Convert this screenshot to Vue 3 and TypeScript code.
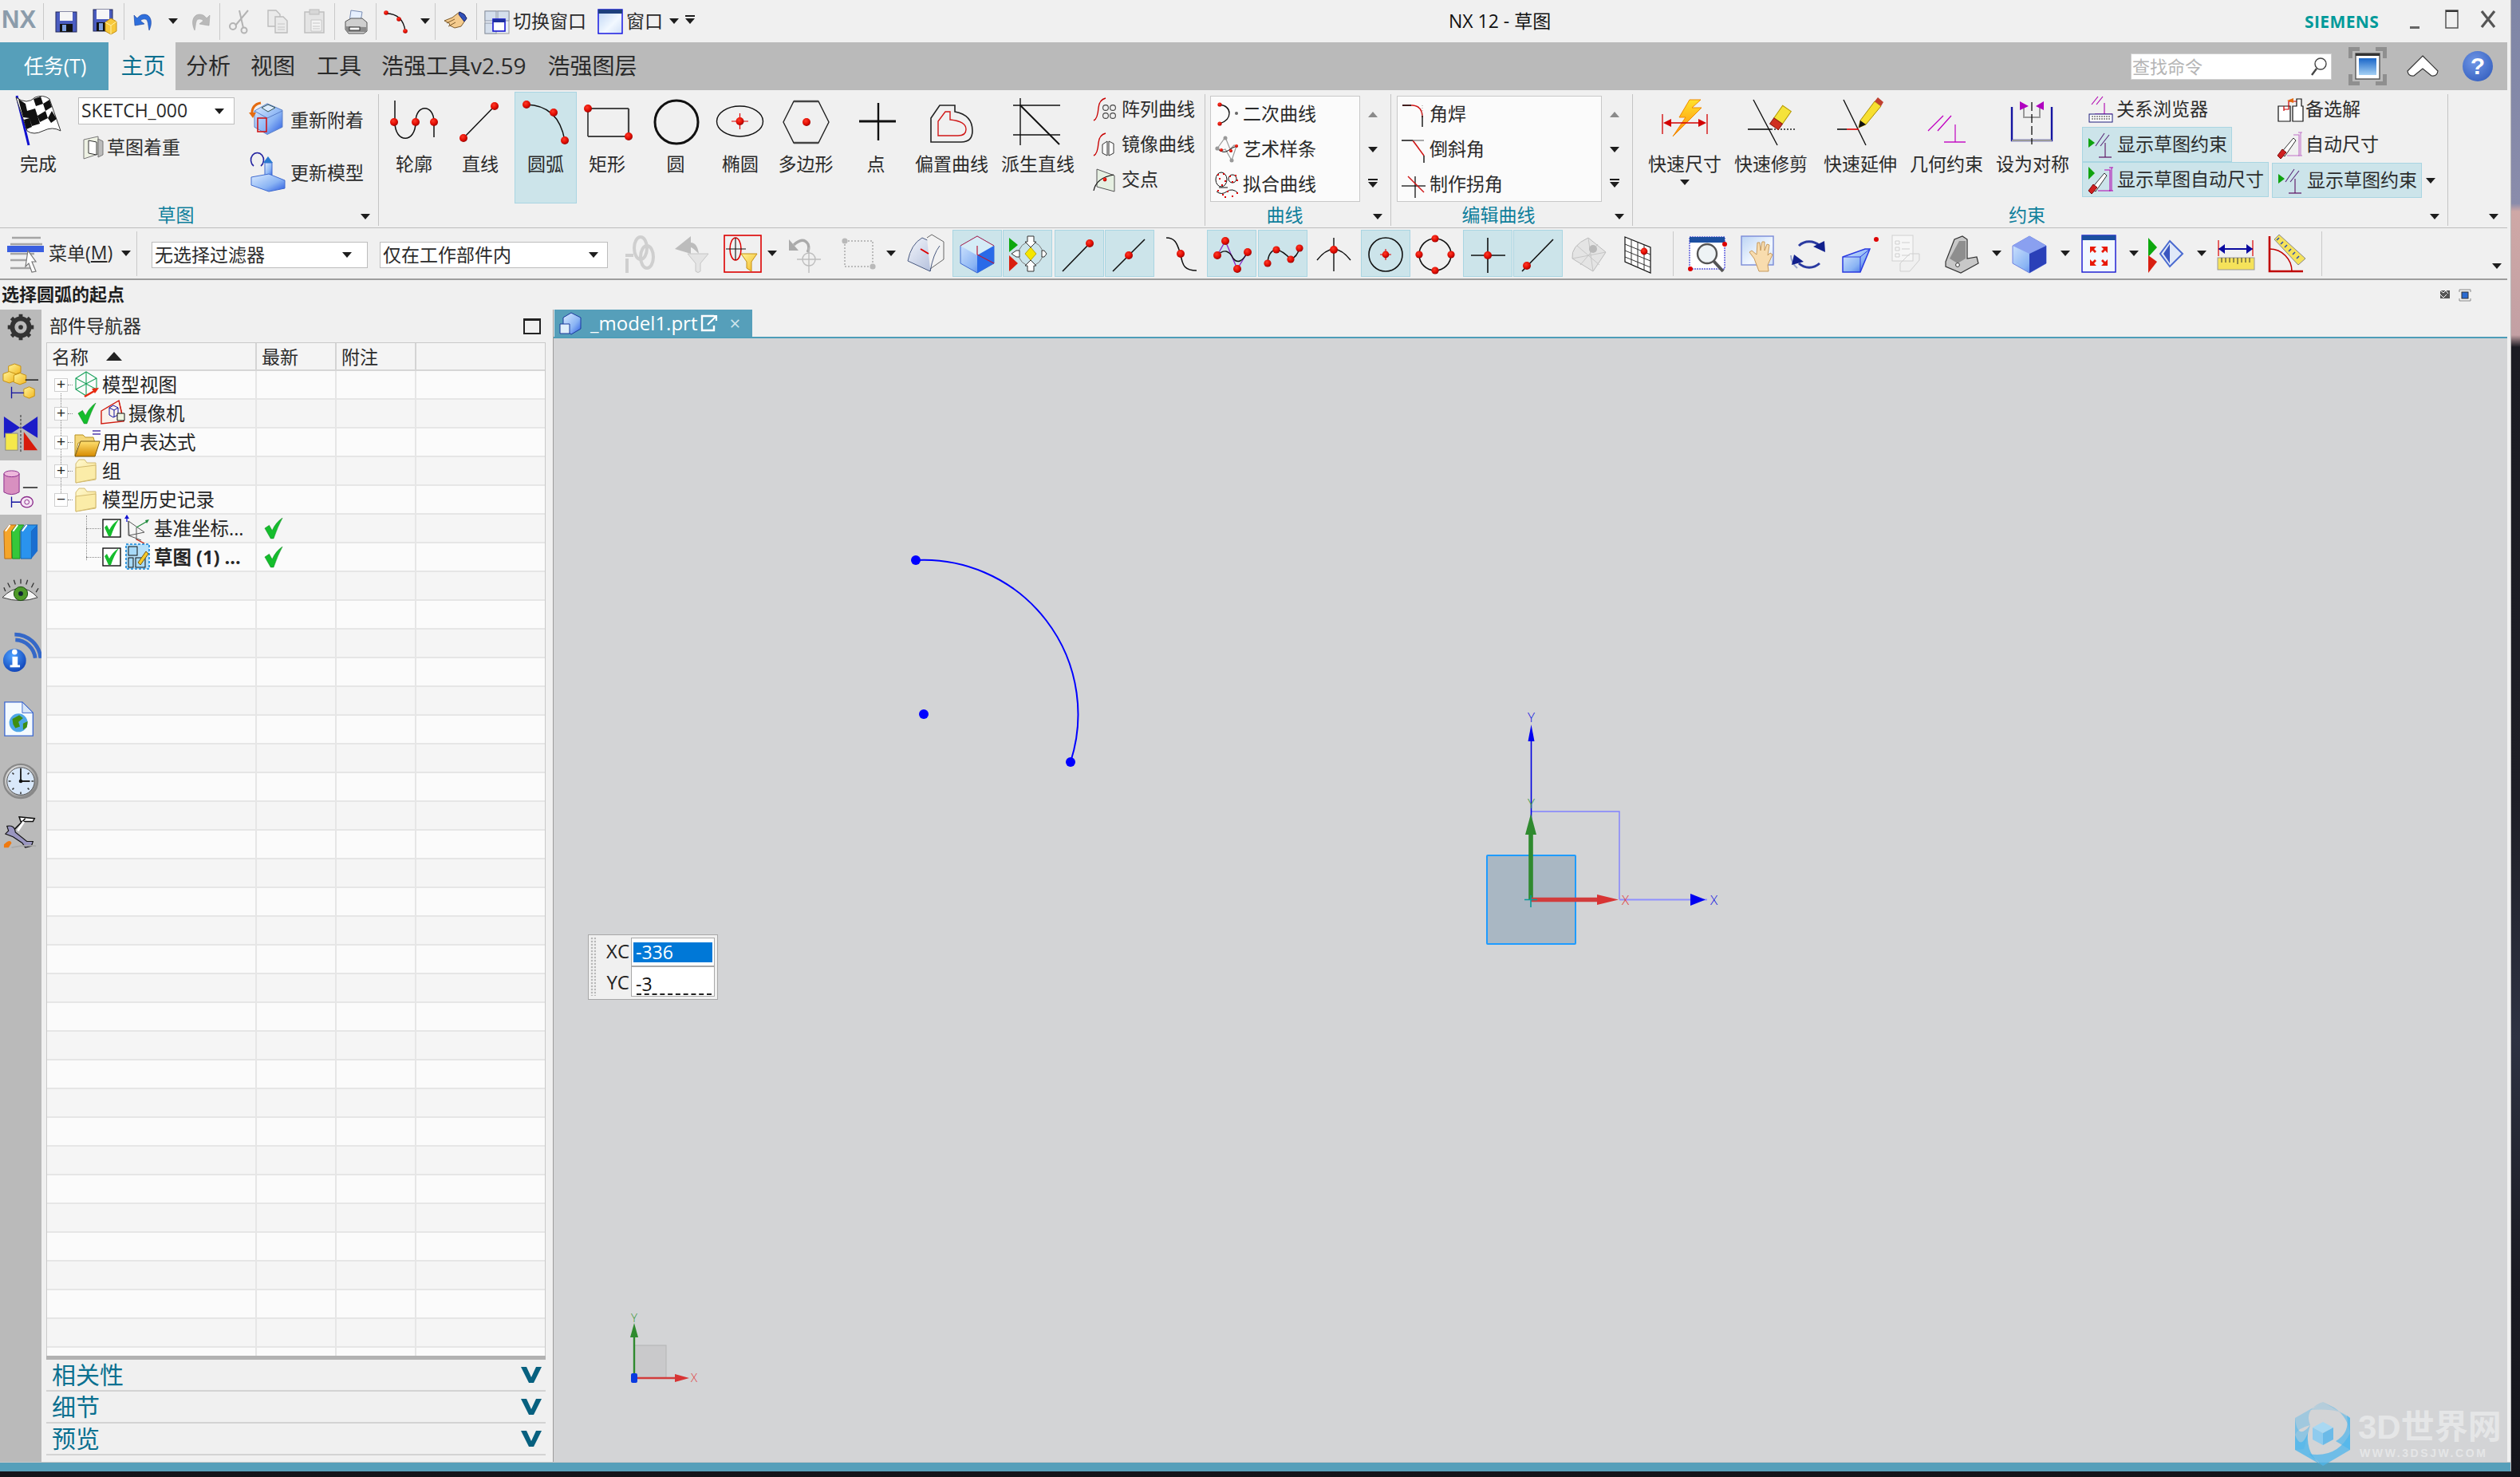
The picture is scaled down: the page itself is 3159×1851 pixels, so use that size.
<script setup lang="ts">
type Cell = { a: number; b: number; k: 'i' | 's' | 'd' | 't'; ic?: string; hl?: boolean; t?: string; c?: string };

const dot = (x: number, y: number, r = 5) => `<circle cx="${x}" cy="${y}" r="${r}" fill="url(#rd)"/>`;
const ln = (d: string, w = 1.6, c = '#111') => `<path d="${d}" fill="none" stroke="${c}" stroke-width="${w}"/>`;
const checkPath = 'M1 15 L7 11 L11 18 Q16 7 25 1 Q19 12 13 29 L9 29 Z';

const I: Record<string, string> = {
  /* title bar, 32 */
  save: `<rect x="3" y="4" width="26" height="25" fill="#4a5cc0" stroke="#20265a"/><rect x="8" y="4" width="16" height="11" fill="#f6f6f6"/><rect x="8" y="19" width="16" height="10" fill="#111"/><rect x="11" y="20" width="5" height="8" fill="#7fa0e0"/>`,
  saveas: `<rect x="3" y="1" width="24" height="27" fill="#4a5cc0" stroke="#20265a"/><rect x="7" y="1" width="16" height="12" fill="#f6f6f6"/><rect x="7" y="17" width="14" height="11" fill="#111"/><rect x="10" y="18" width="5" height="9" fill="#7fa0e0"/><path d="M18 17l7-5 7 4v12l-7 4-7-4z" fill="#f7c83a" stroke="#c58f10"/><path d="M18 17l7 4 7-5M25 21v11" fill="none" stroke="#fff1a8"/>`,
  undo: `<path d="M22 27 C27 17 24 7 16 7 C12 7 9 9 7 12 L3 8 L4 21 L16 19 L11 15 C14 12 19 12 20 16 C21 19 21 23 22 27 Z" fill="#2e6fdc" stroke="#1a3f9c" stroke-width=".6"/>`,
  redo: `<path d="M10 27 C5 17 8 7 16 7 C20 7 23 9 25 12 L29 8 L28 21 L16 19 L21 15 C18 12 13 12 12 16 C11 19 11 23 10 27 Z" fill="#b9b9b9" stroke="#a3a3a3" stroke-width=".6"/>`,
  cut: `<g fill="none" stroke="#b3b3b3" stroke-width="2"><path d="M26 2 L10 21M15 2 L20 24"/><circle cx="7" cy="22" r="4"/><circle cx="21" cy="27" r="3.5"/></g>`,
  copy: `<g fill="#eaeaea" stroke="#bcbcbc" stroke-width="1.4"><path d="M4 2h10l5 5v15H4z"/><path d="M13 10h10l5 5v15H13z"/></g><path d="M16 19h9M16 23h9M16 26h9" stroke="#c6c6c6"/>`,
  paste: `<rect x="4" y="4" width="24" height="26" fill="#e4e4e4" stroke="#bcbcbc" stroke-width="1.4"/><rect x="10" y="1" width="12" height="6" fill="#d6d6d6" stroke="#bcbcbc"/><path d="M12 14h13v14H12z" fill="#f4f4f4" stroke="#c6c6c6"/><path d="M14 18h9M14 22h9M14 25h9" stroke="#c6c6c6"/>`,
  print: `<path d="M10 2l14 2-2 12H8z" fill="#e6f0ff" stroke="#7b8fb5"/><path d="M3 16l7-4h14l6 5v11l-4 3H7l-4-5z" fill="#cfcfcf" stroke="#555"/><path d="M3 22l26 1v6H5z" fill="#8a8a8a"/><rect x="8" y="23" width="13" height="4" fill="#f6f6f6" stroke="#333"/>`,
  arcs: ln('M3 6 Q24 6 27 28', 1.3) + dot(3, 5, 2.8) + dot(19, 13, 2.8) + dot(27, 28, 2.8),
  hand: `<path d="M2 15l10-4 9-7 6 3 3 5-7 10-8 2-6-3-1-3z" fill="#f4cb8e" stroke="#7c5a2a"/><path d="M21 4l6 3 3 5-3 4-7-9z" fill="#3150b8" stroke="#1b2b77"/><path d="M7 22l9-5M5 18l10-5" stroke="#7c5a2a" fill="none"/>`,
  swin: `<rect x="1" y="3" width="30" height="28" fill="#e9eff8" stroke="#999"/><rect x="1" y="3" width="14" height="12" fill="#d5dfec" stroke="#8e98a8"/><rect x="17" y="3" width="14" height="12" fill="#d5dfec" stroke="#8e98a8"/><rect x="1" y="18" width="14" height="13" fill="#d5dfec" stroke="#8e98a8"/><rect x="11" y="13" width="15" height="15" fill="#fff" stroke="#1414d0" stroke-width="1.6"/><rect x="11" y="13" width="15" height="4" fill="#1c2f9c"/>`,
  win: `<rect x="1" y="1" width="30" height="30" fill="url(#wn)" stroke="#0a0ae0" stroke-width="1.4"/><rect x="1" y="1" width="30" height="5" fill="#1c3f7c"/>`,
  min: `<rect x="9" y="22" width="12" height="3" fill="#666"/>`,
  max: `<rect x="8" y="2" width="15" height="22" fill="none" stroke="#555" stroke-width="1.5"/><rect x="8" y="2" width="15" height="2" fill="#333"/>`,
  close: `<path d="M8 3 L24 23M24 3 L8 23" stroke="#555" stroke-width="3.2"/>`,
  /* big tools, 64x68 */
  profile: ln('M8 8 V35 C8 62 34 62 34 35 C34 12 57 12 57 35 V54', 1.5) + dot(7, 35) + dot(34, 35) + dot(57, 35),
  line: ln('M11 55 L50 15', 1.5) + dot(11, 55) + dot(50, 15),
  arc: ln('M8 13 Q48 14 56 58', 1.5) + dot(8, 13) + dot(42, 23) + dot(56, 58),
  rect: ln('M8 18 H59', 1.4) + ln('M8 18 V53', 1.4) + ln('M8 53 H59 V18', 2.2, '#444') + dot(8, 18) + dot(59, 53),
  circle: `<circle cx="33" cy="35" r="27" fill="none" stroke="#111" stroke-width="3"/>`,
  ellipse: `<ellipse cx="31.5" cy="34" rx="29" ry="19" fill="none" stroke="#111" stroke-width="1.4"/>` + ln('M21 34H42M31.5 24V44', 1.2, '#d00') + dot(31.5, 34, 5),
  poly: `<path d="M17 9H48L61 35 48 61H17L4 35Z" fill="none" stroke="#222" stroke-width="1.4"/>` + ln('M17 9H48M17 61H48', 2.4, '#444') + dot(33, 35, 5),
  point: ln('M11 34H57', 3) + ln('M35 11V58', 2.4),
  offset: `<path d="M6 60V30L17 14H36V22Q58 26 58 46Q58 60 44 60Z" fill="none" stroke="#222" stroke-width="1.6"/><path d="M15 52V34L24 22H30V32Q50 34 50 44Q50 52 40 52Z" fill="none" stroke="#d01616" stroke-width="1.4"/>`,
  derived: ln('M10 5V64M1 14H60M1 51H60', 1.4) + ln('M10 14L59 63', 2),
  qdim: `<path d="M38 7H52L41 17H53L17 53 33 29H25Z" fill="url(#bolt)" stroke="#f08a00" stroke-width="1"/>` + ln('M4 25V50M60 25V50', 1.3, '#d20000') + ln('M10 36H54', 1.6, '#d20000') + `<path d="M5 36l10-5v10zM59 36l-10-5v10z" fill="#d20000"/>`,
  qtrim: ln('M10 7L40 64', 1.4) + ln('M3 44H32', 1.6) + ln('M32 44H62', 1.5, '#222').replace('/>', ' stroke-dasharray="2 2"/>') + `<g transform="rotate(35 43 30)"><rect x="37" y="15" width="13" height="19" fill="#f5e33a" stroke="#b59a00"/><rect x="37" y="34" width="13" height="9" fill="#d03020" stroke="#8a1b10"/></g>`,
  qext: ln('M11 7L39 64', 1.4) + ln('M3 44H15', 1.6) + ln('M15 44H30', 1.6, '#d00') + `<path d="M30 42L32 33 50 9 58 15 39 38Z" fill="#f7df30" stroke="#a98a00"/><path d="M30 42L32 33 39 38Z" fill="#111"/><path d="M50 9L54 4 61 10 58 15Z" fill="#c04030"/>`,
  geom: ln('M9 46L28 27M21 46L38 27', 1.3, '#c000c0') + ln('M43 38V60', 1.2, '#c000c0') + ln('M29 60H56', 1.4, '#c000c0'),
  sym: `<path d="M6 16V58H56V16" fill="none" stroke="#1414a0" stroke-width="2.4"/><path d="M6 58H56" stroke="#999" stroke-width="2.2"/><path d="M21 16V29H41V16" fill="none" stroke="#999" stroke-width="2"/><path d="M31 10V63" stroke="#111" stroke-width="1.3" stroke-dasharray="11 4"/><path d="M16 9L27 15 16 20ZM46 9L36 15 46 20Z" fill="#b000c0"/>`,
  flag: `<path d="M5 2 L20 64" stroke="#1010d0" stroke-width="3"/><path d="M4 4 Q18 14 28 4 Q38 0 46 6 L60 46 Q50 40 38 46 Q26 52 18 46Z" fill="#fff" stroke="#333"/><g fill="#111"><path d="M7 6l9 6 2 9-8-3zM26 6l9-3 3 9-9 3zM18 21l10-3 3 9-10 3zM38 12l8-5 3 9-8 5zM10 18l8 3 3 9-8-1zM31 27l10-6 3 9-10 5zM21 30l10-3 3 10-10 3zM44 30l5-9 6 10-7 5zM14 32l7-2 3 11-7 3z"/></g>`,
  /* small row, 30x32 */
  paint: `<path d="M4 6l18-4v22L4 30z" fill="#eef2e4" stroke="#777"/><path d="M10 7l10 2v16l-10-2z" fill="#fff" stroke="#333"/><path d="M22 5l6 3v17l-6 3z" fill="#bcbcbc" stroke="#777"/>`,
  reattach: `<path d="M6 12l16-10 19 9v23L22 44 6 34z" transform="scale(1 .92)" fill="url(#bl)" stroke="#5a7fc8"/><path d="M6 11l16 9 19-9" fill="none" stroke="#5a7fc8"/><path d="M15 7l8-4 9 4-9 5z" fill="#dcebff" stroke="#355"/><rect x="10" y="20" width="11" height="17" fill="none" stroke="#d01616" stroke-width="1.6"/><path d="M14 1Q2 3 3 16" fill="none" stroke="#e46b10" stroke-width="3"/><path d="M-1 13h9l-4 7z" fill="#e46b10"/>`,
  update: `<path d="M9 16 A8 9 0 1 1 18 16" fill="none" stroke="#2323a0" stroke-width="1.6" transform="translate(-4 -2)"/><rect x="19" y="10" width="9" height="18" fill="url(#bl)" stroke="#3f6ad0"/><path d="M23 2l6 8h-12z" fill="#2a7ad0"/><path d="M2 28l22-4 20 8v10L24 46 2 38z" fill="url(#bl)" stroke="#3f6ad0"/>`,
  arrc: ln('M16 2 Q8 4 7 14 Q6 28 1 30', 1.4, '#c80000') + `<g fill="none" stroke="#444" stroke-width="1.1"><circle cx="16" cy="14" r="3.4"/><circle cx="25" cy="14" r="3.4"/><circle cx="16" cy="24" r="3.4"/><circle cx="25" cy="24" r="3.4"/></g>`,
  mirc: ln('M16 2 Q8 4 7 14 Q6 28 1 30', 1.4, '#c80000') + `<path d="M12 16l6-4v18l-6-3zM20 12l6 3v12l-6 3z" fill="#fff" stroke="#333"/>`,
  inter: `<path d="M5 3l22 8v20L5 25z" fill="#e6f0e2" stroke="#555"/>` + ln('M1 30 Q4 14 26 10', 1.2) + dot(15, 16, 2.4),
  conic: ln('M6 4 Q18 6 18 15 Q18 24 6 28', 1.3) + dot(6, 4, 2.6) + dot(6, 28, 2.6) + `<circle cx="27" cy="15" r="2" fill="#666"/>`,
  art: `<path d="M3 15L13 1 19 16 24 11 27 12 21 30 13 16 7 18Z" fill="none" stroke="#999" stroke-width="1.2"/>` + ln('M3 15 Q10 22 16 18 Q22 14 27 12', 1) + `<circle cx="13" cy="2" r="2.5" fill="#999"/><circle cx="3" cy="15" r="2.6" fill="#999"/><circle cx="21" cy="30" r="2.5" fill="#999"/>` + dot(8, 17, 2) + dot(20, 18, 2) + dot(27, 12, 2),
  fit: `<g fill="none" stroke="#111" stroke-width="1"><ellipse cx="8" cy="10" rx="7" ry="9"/><circle cx="22" cy="9" r="5"/><path d="M2 25 Q8 30 15 25 T29 27M5 20H16"/></g><g fill="#d00">` + [[3, 3], [10, 2], [5, 8], [12, 11], [8, 16], [18, 5], [25, 4], [21, 12], [27, 10], [3, 23], [9, 28], [15, 24], [21, 30], [27, 26], [12, 31]].map(p => `<rect x="${p[0]}" y="${p[1]}" width="2" height="2"/>`).join('') + `</g>`,
  fillet: ln('M1 5H14 Q26 6 26 20', 1.5, '#d01616') + ln('M1 5H12', 1.5) + ln('M26 18V32', 1.4) + ln('M26 5V18', 1, '#999').replace('/>', ' stroke-dasharray="1 2"/>'),
  chamfer: ln('M0 5H14', 1.5) + ln('M14 5L28 24', 1.6, '#d01616') + ln('M14 5H28', 1, '#555') + ln('M28 24V33', 1.4),
  corner: ln('M0 18H30', 1.3) + ln('M17 6V33', 1.3) + ln('M8 6L28 26', 1.4, '#d01616'),
  rel: ln('M4 10L12 0M10 10L18 0', 1.1, '#b000b0') + ln('M20 8V22M8 22H30', 1.1, '#b000b0') + `<rect x="1" y="22" width="29" height="10" fill="#fff" stroke="#1a1a7a"/><path d="M4 25h24M4 28h24" stroke="#333" stroke-dasharray="2 1"/>`,
  showc: `<path d="M0 8l8 6-8 6z" fill="#0fa30f"/>` + ln('M9 18L20 2M15 18L26 4', 1.1, '#5a2a7a') + ln('M21 14V32', 1.1, '#5a1060') + ln('M13 32H29', 1.2, '#5a1060'),
  showd: `<path d="M0 0l8 8-8 8z" fill="#0fa30f"/>` + ln('M20 4H27V30H12', 1.1, '#b000b0') + ln('M26 1H31M26 30H31M29 1V30', 1, '#b000b0') + `<path d="M4 27L20 8 23 11 9 31Z" fill="#fff" stroke="#333"/><path d="M0 30l6-8 5 4-7 8z" fill="#d02020" stroke="#7a0a0a"/>`,
  alt: `<path d="M1 12H16V31H1z M19 31V12H24V3H30V12 H32V31Z" fill="#fff" stroke="#111" stroke-width="1.2"/><path d="M8 18V12M8 16H14V6H24" fill="none" stroke="#c00" stroke-width="1.2"/><path d="M12 5l8-3v6z" fill="#e46b10"/>`,
  autod: ln('M20 4H27V30H12', 1.1, '#c070c8') + ln('M26 1H31M26 30H31M29 1V30', 1, '#c070c8') + `<path d="M4 27L20 8 23 11 9 31Z" fill="#fff" stroke="#333"/><path d="M0 30l6-8 5 4-7 8z" fill="#d02020" stroke="#7a0a0a"/>`,
  /* toolbar, 48 */
  menu: `<path d="M6 4h36M4 12h40M4 24h30M4 32h28M4 42h30" stroke="#a5a5a5" stroke-width="2.6"/><rect x="0" y="14" width="46" height="8" fill="#3a5fe0"/><path d="M26 20L36 34H31L36 46 31 47 27 36 23 40Z" fill="#fff" stroke="#777" stroke-width="1.2"/>`,
  links: `<g fill="none" stroke="#cfcfcf" stroke-width="4"><ellipse cx="19" cy="17" rx="8" ry="14"/><ellipse cx="27" cy="28" rx="8" ry="14"/><path d="M0 26H10M2 30V48"/></g>`,
  fgrey: `<path d="M4 18L24 2V10Q32 10 34 24Q26 16 24 16V24Z" fill="#bcbcbc"/><path d="M20 24H46L36 36V46Q33 49 30 46V36Z" fill="#e4e4e4" stroke="#c6c6c6"/>`,
  filt: `<rect x="1" y="1" width="46" height="46" fill="none" stroke="#d00" stroke-width="1.6"/><ellipse cx="15" cy="18" rx="7" ry="14" fill="none" stroke="#d00" stroke-width="1.5"/>` + ln('M3 18H28M15 4V32', 1.1) + `<path d="M22 24H42L35 34V46L29 42V34Z" fill="url(#gold)" stroke="#c58f10"/>`,
  undoc: ln('M10 13 Q22 2 28 12 Q30 18 27 22', 3.4, '#aaa') + `<path d="M4 6V20H16Z" fill="#aaa"/><circle cx="29" cy="31" r="8" fill="none" stroke="#bdbdbd" stroke-width="1.4"/><path d="M29 16V48M14 31H44" stroke="#bdbdbd" stroke-width="1.4"/>`,
  dotr: `<rect x="7" y="8" width="35" height="32" fill="none" stroke="#bbb" stroke-width="2" stroke-dasharray="2 2"/><circle cx="7" cy="8" r="3.6" fill="#b9b9b9"/><circle cx="42" cy="40" r="3.6" fill="#b9b9b9"/>`,
  surf: `<path d="M2 33Q6 12 20 4L42 14Q34 24 30 46Z" fill="url(#sf)" stroke="#4a5a80"/><path d="M26 4l6-4 15 9v22l-17 12" fill="#f2f2f2" stroke="#666"/><path d="M42 14Q34 24 30 46" fill="none" stroke="#4a5a80"/><path d="M18 18L28 24" stroke="#d00" stroke-width="2"/>`,
  cube: `<path d="M3 14L24 2 45 14V36L24 48 3 36Z" fill="url(#bl)" stroke="#3f6ad0"/><path d="M3 14L24 26 45 14" fill="#d5ecf7"/><path d="M24 26L45 14V36L24 48Z" fill="#2a6ae8"/><path d="M24 2V25L45 36" fill="none" stroke="#b81a3a" stroke-width="1.2"/><path d="M3 14L24 2 45 14" fill="#d5ecf7" stroke="#b81a3a" stroke-width=".9"/>`,
  snap: `<path d="M1 4l11 9-11 9z" fill="#0da80d"/><path d="M1 26l11 10-11 10z" fill="#d81f10"/><circle cx="28" cy="24" r="15" fill="none" stroke="#777"/><path d="M24 2h8v7h3l-7 7-7-7h3zM24 46h8v-7h3l-7-7-7 7h3zM14 20v8h-4l-6-4 6-4zM42 20v8h3l3-4-3-4z" fill="#fff" stroke="#333"/><path d="M28 16l7 8-7 8-7-8z" fill="#f5e600" stroke="#bba700"/>`,
  lend: ln('M3 46L37 11', 1.6) + dot(37, 11, 5),
  lmid: ln('M3 46L43 6', 1.6) + dot(23, 26, 5),
  curve: ln('M6 4C20 4 20 16 24 24C26 40 30 45 44 45', 1.6) + dot(24, 24, 5),
  zig: ln('M16 8L31 43 44 22M16 8L6 26', 1.4, '#8a2ac8') + ln('M6 26Q18 14 26 30Q34 40 44 22', 1.4) + dot(16, 8, 5) + dot(6, 26, 5) + dot(44, 22, 5) + dot(31, 43, 5),
  wave: ln('M5 36Q6 20 16 19Q24 20 34 31Q42 28 45 17', 1.5) + dot(5, 36, 4.6) + dot(16, 19, 4.6) + dot(34, 31, 4.6) + dot(45, 17, 4.6),
  tang: ln('M24 4V46', 1.4) + ln('M3 32Q24 5 45 32', 1.4) + dot(24, 19, 5),
  circc: `<circle cx="24" cy="25" r="21" fill="none" stroke="#111" stroke-width="1.6"/>` + ln('M17 25H31M24 18V32', 1.1, '#d00') + dot(24, 25, 4.4),
  circq: `<circle cx="24" cy="25" r="20" fill="none" stroke="#111" stroke-width="1.6"/>` + dot(24, 5, 4.6) + dot(4, 25, 4.6) + dot(44, 25, 4.6) + dot(24, 45, 4.6),
  crossp: ln('M3 26H46M24 4V48', 1.6) + dot(24, 26, 5),
  linep: ln('M4 46L43 6', 1.6) + dot(10, 39, 5),
  mesh: `<path d="M24 4L46 22 30 46 4 30Q2 14 24 4Z" fill="#e4e4e4" stroke="#bbb"/><path d="M24 4L30 46M4 30L46 22M10 14L38 38M36 12L14 38" stroke="#c6c6c6" fill="none"/><circle cx="30" cy="18" r="5" fill="#b9b9b9"/>`,
  grid: `<path d="M8 3L40 16V48L8 34Z" fill="#fff" stroke="#111" stroke-width="1.2"/><path d="M16 6V37M24 10V41M32 13V44M8 12L40 25M8 20L40 33M8 28L40 41" stroke="#333" fill="none"/>` + dot(32, 21, 4.4),
  zoom: `<rect x="1" y="3" width="44" height="40" fill="#fff" stroke="#1414d0" stroke-dasharray="2 1"/><rect x="1" y="3" width="44" height="7" fill="#1c4fa0"/><circle cx="23" cy="24" r="12" fill="#eef3f5" stroke="#555" stroke-width="2.4"/><path d="M31 33L43 46" stroke="#555" stroke-width="4"/><circle cx="45" cy="12" r="3" fill="#d00"/><circle cx="2" cy="43" r="3" fill="#d00"/>`,
  pan: `<rect x="2" y="2" width="40" height="36" fill="url(#wn)" stroke="#7a8ad8" stroke-width="1.4"/><path d="M18 30L12 22 15 20 21 25 22 10 25 10 26 20 28 9 31 9 31 20 34 12 37 13 35 26 38 23 41 25 35 38 36 46 24 46 Z" fill="#f8dcae" stroke="#c79a5c"/>`,
  rot: `<g fill="none" stroke="#2a3aa0" stroke-width="3"><path d="M12 14A19 19 0 0 1 38 14"/><path d="M38 36A19 19 0 0 1 12 36"/></g><path d="M2 26 A22 22 0 0 0 10 42" fill="none" stroke="#9aa6cc" stroke-width="2"/><path d="M30 15L44 8 45 22ZM18 34L3 38 6 25Z" fill="#11208c"/>`,
  cuboid: `<path d="M2 28L30 18 36 18 24 47H2Z" fill="url(#bl)" stroke="#2a3ae0" stroke-width="1.5"/><path d="M2 28H24V47M24 28L36 18" fill="none" stroke="#2a3ae0"/><circle cx="44" cy="6" r="3" fill="#d00"/>`,
  docg: `<rect x="2" y="1" width="26" height="32" fill="#f6f6f6" stroke="#d0d0d0"/><path d="M6 8h5v4H6zM6 16h5v4H6zM6 24h5v4H6zM14 10h10M14 18h10M14 26h10" stroke="#cfcfcf" fill="none"/><path d="M12 36L24 24H36V32L24 46H12Z" fill="none" stroke="#cfcfcf"/>`,
  lbrk: `<path d="M3 34L14 6 24 2 30 6V30L42 28 44 36 22 48 3 40Z" fill="#c8c8c8" stroke="#333" stroke-width="1.2"/><path d="M8 30L20 8H28V30L18 36Z" fill="#8e8e8e"/><circle cx="18" cy="38" r="2.4" fill="#fff" stroke="#333"/>`,
  bcube: `<path d="M2 14L23 2 44 14V36L23 48 2 36Z" fill="url(#bl)" stroke="#6f82e0"/><path d="M2 14L23 24 44 14 23 2Z" fill="#8aa0f0"/><path d="M23 24L44 14V36L23 48Z" fill="#2a40b8"/>`,
  fitv: `<rect x="1" y="1" width="42" height="46" fill="#f2f8ff" stroke="#1414d0" stroke-width="1.4"/><rect x="1" y="1" width="42" height="6" fill="#1c4fa0"/><path d="M11 15l8 0-3 3 3 3-2 2-3-3-3 3zM33 15h-8l3 3-3 3 2 2 3-3 3 3zM11 39h8l-3-3 3-3-2-2-3 3-3-3zM33 39h-8l3-3-3-3 2-2 3 3 3-3z" fill="#e81a0a"/>`,
  vis: `<path d="M1 4L12 16 1 28z" fill="#0da80d"/><path d="M1 26l11 8-11 14z" fill="#d81f10"/><path d="M28 8L44 24 28 40 16 24Z" fill="#dfe8f8" stroke="#4a6ad0" stroke-width="2"/><path d="M28 12V36L20 24Z" fill="#3a56c0"/>`,
  meas: ln('M2 18H45', 2, '#0a0aa0') + ln('M2 7V27M45 7V27', 1.2, '#d00') + `<path d="M2 18L10 12V24ZM45 18L37 12V24Z" fill="#0a0aa0"/><rect x="1" y="29" width="46" height="15" fill="#f5e25a" stroke="#999"/><path d="M6 29v6M11 29v6M16 29v6M21 29v6M26 29v8M31 29v6M36 29v6M41 29v6" stroke="#333"/>`,
  angr: `<path d="M2 2V46H44" fill="none" stroke="#c00000" stroke-width="2.6"/><path d="M2 18A28 28 0 0 1 30 46" fill="none" stroke="#c00000" stroke-width="1.6"/><path d="M8 6L14 0 47 30 38 38Z" fill="#f5e25a" stroke="#888"/><path d="M14 4L11 7M19 9L16 12M24 13L21 16M29 18L26 21M34 22L31 25M39 27L36 30" stroke="#3050b0" stroke-width="1.6"/>`,
  /* tree 32 */
  tview: `<g fill="none" stroke="#17a05a" stroke-width="1.1"><path d="M16 1L29 9V23L16 31 3 23V9Z"/><path d="M3 9L16 16 29 9M16 16V31M3 23L16 16 29 23M16 1V16"/></g><path d="M14 33L28 25" stroke="#e82a10" stroke-width="2.4" transform="translate(0 -1)"/><path d="M32 21l-9 1 4 6z" fill="#e82a10"/>`,
  cam: `<path d="M2 14L24 1 30 27 2 30Z" fill="#f9f2ec" stroke="#d01c10" stroke-width="1.4"/><path d="M24 1L30 27" stroke="#d01c10"/><path d="M12 10l5-3 6 3v9l-6 3-5-3z" fill="none" stroke="#1414a0"/><path d="M12 10l6 3 5-3M18 13v9" fill="none" stroke="#1414a0"/><path d="M22 17h9v9h-9z" fill="#eef6e2" stroke="#111"/>`,
  fopen: `<path d="M2 34V8h10l3 3h10l2 7H6z" fill="#f4d77a" stroke="#b89324"/><path d="M2 35L9 16H33L27 35Z" fill="url(#fo)" stroke="#7a5a10"/><path d="M24 3h10M24 7h10" stroke="#7a6ac0" stroke-width="2"/>`,
  folder: `<path d="M3 32V8L7 3H14L17 7H28V28Z" fill="url(#gold2)" stroke="#d3bb70"/><path d="M3 32L28 27V10L3 13Z" fill="#fbeca8" stroke="#d3bb70"/>`,
  check: `<path d="${checkPath}" fill="#14bd2c" stroke="#0c7f1c" stroke-width=".5"/>`,
  box: `<rect x="1" y="1" width="22" height="22" fill="#fff" stroke="#111" stroke-width="1.4"/><path d="M3 11L6 8 9 14Q13 6 21 1Q15 10 11 22H8Z" fill="#14bd2c"/>`,
  dcs: ln('M4 8 L24 22 L5 26 Z', 1, '#555') + ln('M4 8 V26 M14 16V32M4 26 L20 32', 1, '#555') + ln('M2 9V1', 1.3, '#1414d0') + `<path d="M2 0l3 5H-1z" fill="#1414d0"/>` + ln('M14 16L28 8', 1.3, '#1c8a3a') + `<path d="M30 6l-5 1 2 4z" fill="#1c8a3a"/>` + ln('M14 31L24 36', 1.3, '#c02010'),
  skt: `<rect x="1" y="1" width="29" height="31" fill="#b5e0fa" stroke="#1284d8" stroke-width="1.6" stroke-dasharray="3 2"/><rect x="4" y="4" width="11" height="11" fill="#a8daf8" stroke="#111"/><rect x="4" y="18" width="6" height="12" fill="#a8daf8" stroke="#111"/><rect x="13" y="18" width="12" height="12" fill="#a8daf8" stroke="#111"/><path d="M16 24L26 10 29 13 19 27Z" fill="#f5c92a" stroke="#7a5a10"/>`,
  /* rail 48 */
  gear: `<circle cx="24" cy="24" r="11" fill="none" stroke="#333" stroke-width="6"/><circle cx="24" cy="24" r="3" fill="#333"/><g stroke="#333" stroke-width="5"><path d="M24 7v5M24 36v5M7 24h5M36 24h5M12 12l4 4M36 12l-4 4M12 36l4-4M36 36l-4-4"/></g>`,
  asm: `<g fill="url(#gold)" stroke="#c58f10"><path d="M8 3l8-3 8 3v8l-8 3-8-3z"/><path d="M1 13l8-3 8 3v9l-8 3-8-3z"/><path d="M15 15l8-3 8 3v9l-8 3-8-3z"/><path d="M28 33l7-3 7 3v9l-7 3-7-3z"/></g><path d="M12 30V45M12 38H28" stroke="#1414a0" stroke-width="1.4"/><path d="M30 21H47" stroke="#222" stroke-width="1.6"/>`,
  cons: `<path d="M2 0L24 15 46 0V0L46 28 24 14 2 28Z" fill="#1c1cc8"/><path d="M24 -2V46" stroke="#222" stroke-dasharray="3 2"/><rect x="4" y="22" width="16" height="22" fill="#f5e84a" stroke="#888"/><path d="M28 20L46 44H28Z" fill="#d81a0a"/>`,
  db: `<path d="M2 6V30Q12 36 22 30V6Z" fill="#d890c0" stroke="#8a2a8a"/><ellipse cx="12" cy="6" rx="10" ry="4" fill="#eeb8dc" stroke="#8a2a8a"/><path d="M27 24H46" stroke="#222" stroke-width="1.6"/><path d="M12 36V50M12 43H26" stroke="#1414a0" stroke-width="1.4"/><ellipse cx="32" cy="43" rx="8" ry="7" fill="#f5e6f5" stroke="#8a2a8a" stroke-width="1.4"/><circle cx="32" cy="43" r="3" fill="none" stroke="#8a2a8a"/>`,
  books: `<path d="M2 10L9 2H18L12 10V46H3Z" fill="#f5a52a" stroke="#b86a10"/><path d="M12 10L19 2H28L23 10V46H13Z" fill="#35c83a" stroke="#1a8a1f"/><path d="M24 10L30 2H46L38 10V46H24Z" fill="#2a93ee" stroke="#145ea8"/><path d="M38 10L46 2V36L38 46Z" fill="#1a6ed0"/><path d="M4 10L10 2M14 10L20 2M26 10L32 2" stroke="#fff" stroke-width="2"/>`,
  eye: `<path d="M0 30Q24 6 46 30Q24 38 0 30Z" fill="#f5f5f5" stroke="#333"/><circle cx="24" cy="25" r="9" fill="#4f9a2a" stroke="#1a4a10"/><circle cx="24" cy="25" r="3" fill="#123"/><path d="M4 22L2 17M10 17L7 11M17 13L15 7M24 12V6M31 13L33 7M38 17L41 11M44 23L47 18" stroke="#333" stroke-width="1.4"/>`,
  info: `<circle cx="16" cy="32" r="15" fill="url(#inf)"/><rect x="13" y="27" width="7" height="12" fill="#fff"/><rect x="10" y="38" width="13" height="3" fill="#fff"/><circle cx="16" cy="21" r="3.4" fill="#fff"/><path d="M16 8 A27 27 0 0 1 42 32" transform="translate(1 -3)" fill="none" stroke="#3568c8" stroke-width="5"/><path d="M16 1 A34 34 0 0 1 50 32" transform="translate(0 -3)" fill="none" stroke="#3568c8" stroke-width="5"/>`,
  doc: `<path d="M3 2H26L40 16V46H3Z" fill="#f4fafe" stroke="#3f6ad0" stroke-width="1.4"/><path d="M26 2V16H40Z" fill="#d8e6f8" stroke="#3f6ad0"/><circle cx="21" cy="29" r="12" fill="#4ca6e8"/><path d="M13 24L22 19 27 23 21 28 23 34 17 36 14 31ZM27 30L33 27 32 35 27 38Z" fill="#3f8f10"/>`,
  clock: `<circle cx="24" cy="24" r="22" fill="url(#clk)" stroke="#888" stroke-width="2.4"/><circle cx="24" cy="24" r="18" fill="#d9e8fa" stroke="#555"/><path d="M24 7V24H36" fill="none" stroke="#222" stroke-width="2"/><circle cx="24" cy="24" r="2.4" fill="#111"/><path d="M24 8v3M24 38v3M8 24h3M38 24h3M13 13l2 2M35 13l-2 2M13 35l2-2M35 35l-2-2" stroke="#333" stroke-width="1.6"/>`,
  tools: `<path d="M16 20L30 6M22 4L42 6 40 10 24 10 Z" fill="#fff" stroke="#111" stroke-width="1.6"/><path d="M20 22L28 10" stroke="#fff" stroke-width="3"/><path d="M6 16Q16 14 17 24L32 36 40 36 38 42 30 44 26 38 14 30 4 26 8 22Z" fill="#9a96c0" stroke="#111" stroke-width="1.2"/><path d="M2 40Q10 32 12 38L8 44 2 44Z" fill="#f07a10"/><path d="M12 44Q28 40 44 42" stroke="#aaa" stroke-width="2" fill="none"/>`,
  mdoc: `<path d="M6 8L16 2 28 8V22L16 29 6 22Z" fill="url(#bl)" stroke="#1a3a9c"/><path d="M2 16h12v12H2z" fill="#dfeefa" stroke="#1a3a9c"/>`,
  exp: `<path d="M18 3H3V21H18V15" fill="none" stroke="#fff" stroke-width="2.4"/><path d="M10 14L21 3M15 3H21V9" fill="none" stroke="#fff" stroke-width="2.2"/>`
};

const flow = (cells: Cell[]) => {
  let prev = 0;
  return cells.map(c => {
    const ml = c.a - prev;
    prev = c.b;
    return { ...c, ml, w: c.b - c.a };
  });
};

const titleCells = flow([
  { a: 2, b: 50, k: 't', t: 'NX', c: 'nx' },
  { a: 54, b: 55, k: 's' },
  { a: 67, b: 99, k: 'i', ic: 'save' },
  { a: 113, b: 147, k: 'i', ic: 'saveas' },
  { a: 155, b: 156, k: 's' },
  { a: 165, b: 197, k: 'i', ic: 'undo' },
  { a: 211, b: 222, k: 'd' },
  { a: 234, b: 266, k: 'i', ic: 'redo' },
  { a: 275, b: 276, k: 's' },
  { a: 285, b: 317, k: 'i', ic: 'cut' },
  { a: 332, b: 364, k: 'i', ic: 'copy' },
  { a: 378, b: 410, k: 'i', ic: 'paste' },
  { a: 419, b: 420, k: 's' },
  { a: 430, b: 462, k: 'i', ic: 'print' },
  { a: 471, b: 472, k: 's' },
  { a: 481, b: 513, k: 'i', ic: 'arcs' },
  { a: 527, b: 538, k: 'd' },
  { a: 545, b: 546, k: 's' },
  { a: 555, b: 587, k: 'i', ic: 'hand' },
  { a: 597, b: 598, k: 's' },
  { a: 607, b: 639, k: 'i', ic: 'swin' },
  { a: 643, b: 737, k: 't', t: '切换窗口' },
  { a: 749, b: 781, k: 'i', ic: 'win' },
  { a: 785, b: 832, k: 't', t: '窗口' },
  { a: 839, b: 850, k: 'd' },
  { a: 859, b: 871, k: 'd', c: 'bar' },
  { a: 1816, b: 1960, k: 't', t: 'NX 12 - 草图', c: 'ttl' },
  { a: 2889, b: 2990, k: 't', t: 'SIEMENS', c: 'sie' },
  { a: 3012, b: 3044, k: 'i', ic: 'min' },
  { a: 3058, b: 3090, k: 'i', ic: 'max' },
  { a: 3103, b: 3135, k: 'i', ic: 'close' }
]);

const tbCells = flow([
  { a: 9, b: 57, k: 'i', ic: 'menu' },
  { a: 61, b: 146, k: 't', t: '菜单(M)', c: 'und' },
  { a: 152, b: 163, k: 'd' },
  { a: 171, b: 172, k: 's' },
  { a: 784, b: 832, k: 'i', ic: 'links' },
  { a: 842, b: 890, k: 'i', ic: 'fgrey' },
  { a: 907, b: 955, k: 'i', ic: 'filt' },
  { a: 962, b: 973, k: 'd' },
  { a: 985, b: 1033, k: 'i', ic: 'undoc' },
  { a: 1052, b: 1100, k: 'i', ic: 'dotr' },
  { a: 1111, b: 1122, k: 'd' },
  { a: 1136, b: 1184, k: 'i', ic: 'surf' },
  { a: 1194, b: 1256, k: 'i', ic: 'cube', hl: true },
  { a: 1257, b: 1319, k: 'i', ic: 'snap', hl: true },
  { a: 1322, b: 1384, k: 'i', ic: 'lend', hl: true },
  { a: 1385, b: 1447, k: 'i', ic: 'lmid', hl: true },
  { a: 1450, b: 1510, k: 'i', ic: 'curve' },
  { a: 1513, b: 1575, k: 'i', ic: 'zig', hl: true },
  { a: 1577, b: 1639, k: 'i', ic: 'wave', hl: true },
  { a: 1642, b: 1702, k: 'i', ic: 'tang' },
  { a: 1706, b: 1768, k: 'i', ic: 'circc', hl: true },
  { a: 1769, b: 1829, k: 'i', ic: 'circq' },
  { a: 1834, b: 1896, k: 'i', ic: 'crossp', hl: true },
  { a: 1897, b: 1959, k: 'i', ic: 'linep', hl: true },
  { a: 1966, b: 2016, k: 'i', ic: 'mesh' },
  { a: 2029, b: 2077, k: 'i', ic: 'grid' },
  { a: 2097, b: 2098, k: 's' },
  { a: 2117, b: 2165, k: 'i', ic: 'zoom' },
  { a: 2181, b: 2229, k: 'i', ic: 'pan' },
  { a: 2243, b: 2291, k: 'i', ic: 'rot' },
  { a: 2308, b: 2356, k: 'i', ic: 'cuboid' },
  { a: 2370, b: 2418, k: 'i', ic: 'docg' },
  { a: 2436, b: 2484, k: 'i', ic: 'lbrk' },
  { a: 2497, b: 2508, k: 'd' },
  { a: 2521, b: 2569, k: 'i', ic: 'bcube' },
  { a: 2583, b: 2594, k: 'd' },
  { a: 2609, b: 2657, k: 'i', ic: 'fitv' },
  { a: 2669, b: 2680, k: 'd' },
  { a: 2692, b: 2740, k: 'i', ic: 'vis' },
  { a: 2754, b: 2765, k: 'd' },
  { a: 2779, b: 2827, k: 'i', ic: 'meas' },
  { a: 2843, b: 2891, k: 'i', ic: 'angr' },
  { a: 2910, b: 2911, k: 's' },
  { a: 3124, b: 3135, k: 'd', c: 'low' }
]);

const curveTools = [
  { l: '轮廓', w: 80, ic: 'profile' }, { l: '直线', w: 86, ic: 'line' }, { l: '圆弧', w: 78, ic: 'arc', on: true },
  { l: '矩形', w: 76, ic: 'rect' }, { l: '圆', w: 96, ic: 'circle' }, { l: '椭圆', w: 66, ic: 'ellipse' },
  { l: '多边形', w: 98, ic: 'poly' }, { l: '点', w: 78, ic: 'point' }, { l: '偏置曲线', w: 112, ic: 'offset' }, { l: '派生直线', w: 104, ic: 'derived' }
];
const conTools = [
  { l: '快速尺寸', w: 108, ic: 'qdim', dd: true }, { l: '快速修剪', w: 108, ic: 'qtrim' }, { l: '快速延伸', w: 116, ic: 'qext' },
  { l: '几何约束', w: 100, ic: 'geom' }, { l: '设为对称', w: 116, ic: 'sym' }
];
const smallCurve = [{ l: '阵列曲线', ic: 'arrc' }, { l: '镜像曲线', ic: 'mirc' }, { l: '交点', ic: 'inter' }];
const gal1 = [{ l: '二次曲线', ic: 'conic' }, { l: '艺术样条', ic: 'art' }, { l: '拟合曲线', ic: 'fit' }];
const gal2 = [{ l: '角焊', ic: 'fillet' }, { l: '倒斜角', ic: 'chamfer' }, { l: '制作拐角', ic: 'corner' }];

const rail = [
  { ic: 'gear', gap: 0, h: 44 }, { ic: 'asm', gap: 17, h: 60 }, { ic: 'cons', gap: 11, h: 50 },
  { ic: 'db', gap: 7, h: 68, sel: true }, { ic: 'books', gap: 9, h: 50 }, { ic: 'eye', gap: 14, h: 50 },
  { ic: 'info', gap: 27, h: 50 }, { ic: 'doc', gap: 31, h: 50 }, { ic: 'clock', gap: 28, h: 50 }, { ic: 'tools', gap: 14, h: 50 }
];

const treeRows = [
  { exp: '+', ic: 'tview', t: '模型视图' },
  { exp: '+', chk: true, ic: 'cam', t: '摄像机' },
  { exp: '+', ic: 'fopen', t: '用户表达式' },
  { exp: '+', ic: 'folder', t: '组' },
  { exp: '−', ic: 'folder', t: '模型历史记录' },
  { box: true, ic: 'dcs', t: '基准坐标...', ok: true },
  { box: true, ic: 'skt', t: '草图 (1) ...', ok: true, b: true },
  ...Array.from({ length: 28 }, () => ({}))
] as { exp?: string; chk?: boolean; box?: boolean; ic?: string; t?: string; ok?: boolean; b?: boolean }[];
</script>

<template>
  <div class="app">
    <svg class="defs" width="0" height="0">
      <defs>
        <radialGradient id="rd" cx=".4" cy=".35" r=".7"><stop offset="0" stop-color="#ff3a2a" /><stop offset=".6" stop-color="#e00c00" /><stop offset="1" stop-color="#8c0000" /></radialGradient>
        <linearGradient id="bl" x1="0" y1="0" x2="1" y2="1"><stop offset="0" stop-color="#dcecff" /><stop offset=".6" stop-color="#8ab4f4" /><stop offset="1" stop-color="#2a5ae0" /></linearGradient>
        <linearGradient id="wn" x1="0" y1="0" x2="1" y2="1"><stop offset="0" stop-color="#bcd4f4" /><stop offset=".6" stop-color="#f2f8ff" /><stop offset="1" stop-color="#cfdff6" /></linearGradient>
        <linearGradient id="wn2" x1="0" y1="0" x2="0" y2="1"><stop offset="0" stop-color="#1a66c8" /><stop offset="1" stop-color="#a4d0f4" /></linearGradient>
        <linearGradient id="gold" x1="0" y1="0" x2="1" y2="1"><stop offset="0" stop-color="#fff59a" /><stop offset="1" stop-color="#f2b620" /></linearGradient>
        <linearGradient id="gold2" x1="0" y1="0" x2="1" y2="1"><stop offset="0" stop-color="#fff9cf" /><stop offset="1" stop-color="#f5de8a" /></linearGradient>
        <linearGradient id="fo" x1="0" y1="0" x2="0" y2="1"><stop offset="0" stop-color="#ffe070" /><stop offset="1" stop-color="#d68a00" /></linearGradient>
        <linearGradient id="bolt" x1="0" y1="0" x2="0" y2="1"><stop offset="0" stop-color="#ffe22a" /><stop offset="1" stop-color="#ff8a10" /></linearGradient>
        <linearGradient id="sf" x1="0" y1="0" x2="1" y2="1"><stop offset="0" stop-color="#f4f6fb" /><stop offset="1" stop-color="#aab8d8" /></linearGradient>
        <radialGradient id="inf" cx=".4" cy=".3" r=".8"><stop offset="0" stop-color="#4ca0ff" /><stop offset="1" stop-color="#0a3ab0" /></radialGradient>
        <linearGradient id="clk" x1="0" y1="0" x2="1" y2="1"><stop offset="0" stop-color="#eee" /><stop offset="1" stop-color="#777" /></linearGradient>
      </defs>
    </svg>

    <div class="win">
      <header class="title">
        <template v-for="(c, i) in titleCells" :key="i">
          <div v-if="c.k === 's'" class="sep" :style="{ marginLeft: c.ml + 'px' }"></div>
          <div v-else-if="c.k === 'd'" class="cell" :style="{ marginLeft: c.ml + 'px', width: c.w + 'px' }"><i class="dd" :class="c.c"></i></div>
          <div v-else-if="c.k === 't'" class="cell txt" :class="c.c" :style="{ marginLeft: c.ml + 'px', width: c.w + 'px' }">{{ c.t }}</div>
          <div v-else class="cell" :style="{ marginLeft: c.ml + 'px', width: c.w + 'px' }"><svg class="i32" viewBox="0 0 32 32" v-html="I[c.ic!]"></svg></div>
        </template>
      </header>

      <nav class="tabs">
        <div class="task">任务(T)</div>
        <div class="home">主页</div>
        <div class="tablist">
          <span>分析</span><span>视图</span><span class="gp">工具</span><span>浩强工具v2.59</span><span class="gp">浩强图层</span>
        </div>
        <div class="tabr">
          <div class="search">
            <span>查找命令</span>
            <svg class="sgl" viewBox="0 0 22 26"><circle cx="13" cy="10" r="7" fill="#fff" stroke="#444" stroke-width="1.4" /><path d="M8 16L2 24" stroke="#444" stroke-width="2.4" /></svg>
          </div>
          <svg class="fs" viewBox="0 0 48 48">
            <path d="M0 14V0H14V5H5V14ZM48 14V0H34V5H43V14ZM0 34V48H14V43H5V34ZM48 34V48H34V43H43V34Z" fill="#8f8f8f" />
            <rect x="9" y="8" width="30" height="32" fill="#fff" stroke="#555" stroke-width="1.4" />
            <rect x="9" y="8" width="30" height="3" fill="#333" />
            <rect x="13" y="14" width="22" height="21" fill="url(#wn2)" />
          </svg>
          <svg class="up" viewBox="0 0 40 28"><path d="M20 1L39 20Q38 27 31 26L20 17 9 26Q2 27 1 20Z" fill="#fff" stroke="#333" stroke-width="1.2" /></svg>
          <div class="help">?</div>
        </div>
      </nav>

      <section class="ribbon">
        <div class="grp g1">
          <div class="gc">
            <div class="tool w96">
              <svg class="big" viewBox="0 0 64 68" v-html="I.flag"></svg>
              <div class="tl">完成</div>
            </div>
            <div class="colA">
              <div class="combo sk">SKETCH_000<i class="dd"></i></div>
              <div class="rowS paint"><svg class="sm" viewBox="0 0 30 32" v-html="I.paint"></svg><span>草图着重</span></div>
            </div>
            <div class="colB">
              <div class="rowB"><svg class="md" viewBox="0 0 46 46" v-html="I.reattach"></svg><span>重新附着</span></div>
              <div class="rowB r2"><svg class="md" viewBox="0 0 46 46" v-html="I.update"></svg><span>更新模型</span></div>
            </div>
          </div>
          <div class="gl"><span>草图</span><i class="dd"></i></div>
        </div>

        <div class="grp g2">
          <div class="gc">
            <div v-for="t in curveTools" :key="t.l" class="tool" :class="{ on: t.on }" :style="{ width: t.w + 'px' }">
              <svg class="big" viewBox="0 0 64 68" v-html="I[t.ic]"></svg>
              <div class="tl">{{ t.l }}</div>
            </div>
            <div class="smcol">
              <div v-for="s in smallCurve" :key="s.l" class="rowS"><svg class="sm" viewBox="0 0 30 32" v-html="I[s.ic]"></svg><span>{{ s.l }}</span></div>
            </div>
          </div>
        </div>

        <div class="grp g3">
          <div class="gc">
            <div class="gallery w188">
              <div v-for="s in gal1" :key="s.l" class="rowS"><svg class="sm" viewBox="0 0 30 32" v-html="I[s.ic]"></svg><span>{{ s.l }}</span></div>
            </div>
            <div class="scr"><i class="upg"></i><i class="dd"></i><i class="dd bar"></i></div>
          </div>
          <div class="gl"><span>曲线</span><i class="dd"></i></div>
        </div>

        <div class="grp g4">
          <div class="gc">
            <div class="gallery w257">
              <div v-for="s in gal2" :key="s.l" class="rowS"><svg class="sm" viewBox="0 0 30 32" v-html="I[s.ic]"></svg><span>{{ s.l }}</span></div>
            </div>
            <div class="scr"><i class="upg"></i><i class="dd"></i><i class="dd bar"></i></div>
          </div>
          <div class="gl"><span>编辑曲线</span><i class="dd"></i></div>
        </div>

        <div class="grp g5">
          <div class="gc">
            <div v-for="t in conTools" :key="t.l" class="tool" :style="{ width: t.w + 'px' }">
              <svg class="big" viewBox="0 0 64 68" v-html="I[t.ic]"></svg>
              <div class="tl">{{ t.l }}</div>
              <i v-if="t.dd" class="dd tdd"></i>
            </div>
            <div class="c1">
              <div class="rowS r1p"><svg class="sm" viewBox="0 0 30 32" v-html="I.rel"></svg><span>关系浏览器</span></div>
              <div class="rowS hlb w188b"><svg class="sm" viewBox="0 0 30 32" v-html="I.showc"></svg><span>显示草图约束</span></div>
              <div class="rowS hlb w234b"><svg class="sm" viewBox="0 0 30 32" v-html="I.showd"></svg><span>显示草图自动尺寸</span></div>
            </div>
            <div class="c2">
              <div class="rowS r1p"><svg class="sm" viewBox="0 0 30 32" v-html="I.alt"></svg><span>备选解</span></div>
              <div class="rowS r1p"><svg class="sm" viewBox="0 0 30 32" v-html="I.autod"></svg><span>自动尺寸</span></div>
              <div class="lastrow">
                <div class="rowS hlb w188b"><svg class="sm" viewBox="0 0 30 32" v-html="I.showc"></svg><span>显示草图约束</span></div>
                <i class="dd"></i>
              </div>
            </div>
          </div>
          <div class="gl"><span>约束</span><i class="dd"></i></div>
        </div>

        <div class="grp g6">
          <div class="gc"></div>
          <div class="gl"><span></span><i class="dd"></i></div>
        </div>
      </section>

      <section class="toolbar">
        <template v-for="(c, i) in tbCells" :key="i">
          <div v-if="c.k === 's'" class="sep tall" :style="{ marginLeft: c.ml + 'px' }"></div>
          <div v-else-if="c.k === 'd'" class="cell" :class="c.c" :style="{ marginLeft: c.ml + 'px', width: c.w + 'px' }"><i class="dd"></i></div>
          <div v-else-if="c.k === 't'" class="cell txt" :style="{ marginLeft: c.ml + 'px', width: c.w + 'px' }">菜单(<u>M</u>)</div>
          <div v-else class="cell tbi" :class="{ hl: c.hl }" :style="{ marginLeft: c.ml + 'px', width: c.w + 'px' }"><svg class="i48" viewBox="0 0 48 48" v-html="I[c.ic!]"></svg></div>
        </template>
      </section>
      <div class="combo cb1">无选择过滤器<i class="dd"></i></div>
      <div class="combo cb2">仅在工作部件内<i class="dd"></i></div>

      <div class="prompt">
        <b>选择圆弧的起点</b>
        <div class="pr">
          <svg width="14" height="14" viewBox="0 0 14 14"><path d="M1 1h12v10H1z" fill="#555" /><path d="M1 1l4 3 3-3 3 4M1 6l4 4 4-4" stroke="#fff" fill="none" /></svg>
          <svg width="16" height="16" viewBox="0 0 16 16"><path d="M1 4V1H15V4M1 12V15H15V12" fill="none" stroke="#888" /><rect x="4" y="4" width="8" height="8" fill="#2a6ad0" stroke="#333" /></svg>
        </div>
      </div>

      <main class="main">
        <aside class="rail">
          <div v-for="r in rail" :key="r.ic" class="ri" :class="{ sel: r.sel }" :style="{ marginTop: r.gap + 'px', height: r.h + 'px' }">
            <svg class="i48 rs" viewBox="0 0 48 48" v-html="I[r.ic]"></svg>
          </div>
        </aside>

        <div class="panel">
          <div class="ph"><span>部件导航器</span><i class="maxb"></i></div>
          <div class="tree">
            <div class="row head">
              <div class="c0">名称<i class="sorta"></i></div><div class="c">最新</div><div class="c">附注</div><div class="c last"></div>
            </div>
            <div class="body">
              <i class="vl v1"></i><i class="vl v2"></i>
              <div v-for="(r, i) in treeRows" :key="i" class="row" :class="{ alt: i % 2 === 1 }">
                <div class="c0 nm" :class="{ bd: r.b, indent: r.box }">
                  <span v-if="r.exp" class="exp">{{ r.exp }}</span>
                  <i v-if="r.exp" class="hd"></i>
                  <i v-if="r.box" class="hd2"></i>
                  <svg v-if="r.chk" class="ck" viewBox="0 0 26 30" v-html="I.check"></svg>
                  <svg v-if="r.box" class="bx" viewBox="0 0 24 24" v-html="I.box"></svg>
                  <svg v-if="r.ic" class="ti" viewBox="0 0 32 34" v-html="I[r.ic]"></svg>
                  <span v-if="r.t" class="tt">{{ r.t }}</span>
                </div>
                <div class="c"><svg v-if="r.ok" class="ck ok" viewBox="0 0 26 30" v-html="I.check"></svg></div>
                <div class="c"></div>
                <div class="c last"></div>
              </div>
            </div>
          </div>
          <div class="split"></div>
          <div v-for="s in ['相关性', '细节', '预览']" :key="s" class="sec">
            <span>{{ s }}</span>
            <svg class="chev" viewBox="0 0 28 22"><path d="M1 1H8L14 14 20 1H27L17 21H11Z" fill="#07607f" /></svg>
          </div>
        </div>

        <div class="view">
          <div class="vtabs">
            <div class="mtab">
              <svg class="mi" viewBox="0 0 30 30" v-html="I.mdoc"></svg>
              <span>_model1.prt</span>
              <svg class="mex" viewBox="0 0 24 24" v-html="I.exp"></svg>
              <em>×</em>
            </div>
          </div>
          <div class="canvas">
            <svg class="cv" viewBox="694 424 2450 1408">
              <path d="M1148 702A193.5 193.5 0 0 1 1342 955" fill="none" stroke="#0000ff" stroke-width="2" />
              <circle cx="1148" cy="702" r="6" fill="#0000ff" /><circle cx="1158" cy="895" r="6" fill="#0000ff" /><circle cx="1342" cy="955" r="6" fill="#0000ff" />

              <rect x="1864" y="1072" width="111" height="111" rx="1" fill="#a9b7c3" stroke="#1e9bff" stroke-width="2" />
              <path d="M1919.5 1017H2030V1127" fill="none" stroke="#8080ff" stroke-width="1.4" />
              <path d="M1919.5 1127V925" stroke="#0000e0" stroke-width="1.6" />
              <path d="M1919.5 908L1923.5 929H1915.5Z" fill="#0000f0" />
              <path d="M2030 1127.5H2140" stroke="#8f8fff" stroke-width="2" />
              <path d="M2119 1120L2138 1127.5 2119 1135Z" fill="#0000f0" />
              <path d="M1919 1127V1042" stroke="#2f8a2f" stroke-width="5.6" />
              <path d="M1919 1020L1926 1046H1912Z" fill="#2f8a2f" />
              <path d="M1919 1127.5H2004" stroke="#d23c3c" stroke-width="5.6" />
              <path d="M2002 1121L2029 1127.5 2002 1134Z" fill="#d83434" />
              <path d="M1911 1127.5H1927M1919 1122V1137" stroke="#0a9a9a" stroke-width="1.6" />
              <text x="1919.5" y="905" class="ax" fill="#1414e0">Y</text>
              <text x="1919.5" y="1013" class="ax" fill="#3f9a3f">Y</text>
              <text x="2037.5" y="1134" class="ax" fill="#e04040">X</text>
              <text x="2148.5" y="1134" class="ax" fill="#1414e0">X</text>

              <rect x="795" y="1686" width="40" height="41" fill="#c9c9cb" stroke="#b4b4b4" />
              <path d="M795 1727V1672" stroke="#2f8a2f" stroke-width="2.4" />
              <path d="M795 1658L800 1676H790Z" fill="#2f8a2f" />
              <path d="M795 1727H852" stroke="#d23c3c" stroke-width="2.4" />
              <path d="M846 1722L864 1727 846 1732Z" fill="#d83434" />
              <rect x="791" y="1721" width="8" height="12" rx="2" fill="#0a3ae0" />
              <text x="795" y="1657" class="ax ax2" fill="#3f9a3f">Y</text>
              <text x="870" y="1732" class="ax ax2" fill="#e04040">X</text>
            </svg>

            <div class="pop">
              <i class="grip"></i>
              <div class="plab"><span>XC</span><span>YC</span></div>
              <div class="pin">
                <div class="pf"><em>-336</em></div>
                <div class="pf pf2"><b>-3</b><i class="dash"></i></div>
              </div>
            </div>
          </div>
        </div>
      </main>
      <div class="sbar"></div>
    </div>

    <div class="wm">
      <svg class="wh" viewBox="0 0 72 82">
        <g fill="#4db5ec">
          <path d="M36 1L70 21 Q58 8 20 11Z" opacity=".22" />
          <path d="M36 1L70 21V42Q68 20 50 8Z" opacity=".55" />
          <path d="M70 21V61L52 50Q70 40 66 18Z" opacity=".7" />
          <path d="M70 61L36 81 18 66Q54 72 70 40Z" opacity=".75" />
          <path d="M36 81L1 61V42Q8 62 17 40 15 68 36 81Z" opacity=".8" />
          <path d="M1 61V21Q4 50 20 30L12 60Z" opacity=".5" />
          <path d="M1 21L36 1Q12 10 20 30 4 34 1 42Z" opacity=".38" />
        </g>
        <path d="M36 21L52 31V51L36 61 20 51V31Z" fill="#d3d4d6" />
        <path d="M36 26L49 33 36 40 23 33Z" fill="#a9d8f2" />
        <path d="M23 33L36 40V55L23 48Z" fill="#8fcbee" />
        <path d="M49 33L36 40V55L49 48Z" fill="#6bbae8" />
      </svg>
      <div class="wt"><b>3D世界网</b><span>WWW.3DSJW.COM</span></div>
    </div>
  </div>
</template>

<style>
html, body { margin: 0; background: #15151c; overflow: hidden; }
</style>

<style scoped>
.app {
  position: relative; width: 3159px; height: 1851px; overflow: hidden;
  background: linear-gradient(180deg, #7f86a6 0, #8a8cab 255px, #cfa8a6 265px, #c3a0a4 420px, #1b1b22 435px, #1e1e26 1000px, #2e3242 1300px, #1a1a22 1600px, #14141a 1851px);
  font-family: "Open Sans", "Noto Sans CJK SC", sans-serif; color: #2b2b2b;
}
.defs { position: absolute; }
.win {
  position: relative; width: 3148px; height: 1844px; box-sizing: border-box; display: flex; flex-direction: column;
  background: #f0f0f0; padding-right: 4px; border-right: 1px solid #b8b8b8;
}
i { display: block; font-style: normal; }
.cell { display: flex; align-items: center; justify-content: center; flex: none; height: 100%; box-sizing: border-box; }
.sep { flex: none; width: 1px; height: 46px; background: #c9c9c9; }
.sep.tall { height: 56px; }
.txt { font-size: 23px; white-space: nowrap; justify-content: flex-start; padding-bottom: 3px; }
.dd { width: 0; height: 0; border-left: 6px solid transparent; border-right: 6px solid transparent; border-top: 7px solid #1d1d1d; flex: none; }
.dd.bar { position: relative; }
.dd.bar::before { content: ""; position: absolute; left: -6px; top: -11px; width: 12px; height: 2px; background: #1d1d1d; }
.low { padding-top: 32px; }
.i32 { width: 32px; height: 32px; overflow: visible; }
.i48 { width: 48px; height: 48px; overflow: visible; }

.title { height: 53px; flex: none; display: flex; align-items: center; }
.nx { font-size: 31px; font-weight: 700; color: #8b9cab; font-family: "Liberation Sans", sans-serif; }
.ttl { font-size: 23px; color: #111; }
.sie { font-size: 21px; font-weight: 700; color: #009a9a; font-family: "Open Sans", sans-serif; letter-spacing: .4px; padding-bottom: 0; }

.tabs { height: 60px; flex: none; display: flex; background: #bababa; font-size: 28px; color: #2a2a2a; line-height: 54px; }
.task { width: 136px; background: #569fba; color: #fff; font-size: 25px; display: flex; align-items: center; justify-content: center; box-sizing: border-box; padding: 0 0 3px 2px; }
.home { width: 84px; background: #f0f0f0; color: #0a6f8e; display: flex; align-items: center; justify-content: center; box-sizing: border-box; padding: 0 0 3px 3px; }
.tablist { display: flex; align-items: center; gap: 25px; margin-left: 13px; white-space: nowrap; padding-bottom: 3px; }
.tablist .gp { margin-left: 2px; }
.tabr { margin-left: auto; margin-right: 18px; display: flex; align-items: center; }
.search { width: 252px; height: 33px; box-sizing: border-box; background: #fff; border: 1px solid #d0d0d0; display: flex; align-items: center; justify-content: space-between; padding: 0 4px 0 1px; color: #b5b5b5; font-size: 22px; line-height: 28px; }
.sgl { width: 22px; height: 26px; }
.fs { width: 48px; height: 48px; margin-left: 21px; }
.up { width: 40px; height: 28px; margin-left: 25px; }
.help { width: 38px; height: 38px; margin-left: 30px; border-radius: 50%; background: radial-gradient(circle at 40% 35%, #6f96e6, #2a55b8); color: #fff; font: 700 30px/38px "Liberation Sans", sans-serif; text-align: center; }

.ribbon { height: 173px; flex: none; box-sizing: border-box; display: flex; border-bottom: 1px solid #bdbdbd; }
.grp { flex: none; display: flex; flex-direction: column; height: 172px; position: relative; }
.grp::after { content: ""; position: absolute; right: 0; top: 5px; bottom: 2px; width: 1px; background: #c4c4c4; }
.g1 { width: 475px; }
.g2 { width: 1036px; }
.g3 { width: 233px; }
.g4 { width: 303px; }
.g5 { width: 1022px; }
.g6 { flex: 1; }
.g6::after { display: none; }
.gc { height: 144px; display: flex; padding-top: 2px; box-sizing: border-box; flex: none; }
.gl { flex: 1; display: flex; align-items: center; color: #0f7f9c; font-size: 23px; }
.gl span { flex: 1; text-align: center; white-space: nowrap; line-height: 24px; margin-top: -5px; }
.gl .dd { margin: 0 11px; }
.g2 .gc { padding-left: 4px; }
.tool { flex: none; height: 140px; box-sizing: border-box; display: flex; flex-direction: column; align-items: center; padding-top: 3px; position: relative; }
.tool.on { background: #cce4ea; outline: 1px solid #a9d5e2; outline-offset: -1px; }
.big { width: 64px; height: 68px; flex: none; overflow: visible; }
.tl { font-size: 23px; line-height: 38px; white-space: nowrap; }
.tdd { margin-top: 1px; }
.w96 { width: 96px; }
.rowS { display: flex; align-items: center; height: 44px; font-size: 23px; white-space: nowrap; box-sizing: border-box; }
.rowS span, .rowB span { line-height: 28px; margin-top: -3px; }
.sm { width: 30px; height: 32px; flex: none; margin-right: 5px; overflow: visible; }
.md { width: 46px; height: 46px; flex: none; margin-right: 5px; overflow: visible; }
.colA { margin-left: 2px; width: 215px; }
.combo { box-sizing: border-box; background: #fff; border: 1px solid #bdbdbd; display: flex; align-items: center; justify-content: space-between; font-size: 23px; line-height: 26px; padding: 0 12px 2px 3px; white-space: nowrap; }
.combo .dd { margin-top: 2px; }
.sk { width: 196px; height: 34px; margin-top: 7px; font-size: 23px; }
.paint { margin: 7px 0 0 3px; }
.paint .sm { margin-right: 3px; }
.colB { display: flex; flex-direction: column; }
.rowB { display: flex; align-items: center; height: 44px; font-size: 23px; white-space: nowrap; margin-top: 14px; }
.rowB.r2 { margin-top: 22px; }
.smcol { margin-left: 17px; }
.smcol .sm { margin-right: 6px; }
.gallery { box-sizing: border-box; height: 133px; background: #fbfbfb; border: 1px solid #c8c8c8; margin: 5px 0 0 6px; padding-left: 5px; }
.w188 { width: 188px; }
.w257 { width: 257px; margin-left: 7px; }
.scr { width: 32px; margin-top: 5px; display: flex; flex-direction: column; align-items: center; gap: 37px; padding-top: 20px; }
.upg { width: 0; height: 0; border-left: 6px solid transparent; border-right: 6px solid transparent; border-bottom: 7px solid #8a8a8a; }
.g5 .gc { padding-left: 11px; }
.c1 { width: 238px; margin-left: 4px; }
.c1 .rowS, .c2 .rowS { padding-left: 8px; }
.c2 .r1p { padding-left: 7px; }
.hlb { background: #cce4ea; outline: 1px solid #a9d5e2; outline-offset: -1px; }
.w188b { width: 188px; }
.w234b { width: 234px; }
.c1 .hlb .sm, .c2 .hlb .sm { margin-right: 6px; }
.lastrow { display: flex; align-items: center; gap: 5px; margin-top: 1px; }

.toolbar { height: 63px; flex: none; display: flex; align-items: center; border-bottom: 2px solid #9d9d9d; box-sizing: content-box; }
.tbi { height: 59px; }
.tbi.hl { background: #cce4ea; outline: 1px solid #a9d5e2; outline-offset: -1px; }
.cb1, .cb2 { position: absolute; top: 303px; height: 33px; }
.cb1 { left: 190px; width: 271px; padding-right: 19px; }
.cb2 { left: 476px; width: 286px; padding-right: 11px; }

.prompt { height: 37px; flex: none; display: flex; align-items: center; font-size: 22px; color: #1e1e1e; padding-left: 2px; box-sizing: border-box; }
.prompt b { font-weight: 700; line-height: 28px; margin-top: -3px; }
.pr { margin-left: auto; margin-right: 45px; display: flex; gap: 10px; align-items: center; }

.main { flex: 1; min-height: 0; display: flex; }
.rail { width: 52px; flex: none; background: #bababa; overflow: hidden; }
.ri { display: flex; align-items: center; justify-content: center; }
.ri.sel { background: #f0f0f0; }
.rs { width: 46px; height: 46px; }
.panel { width: 642px; flex: none; box-sizing: border-box; padding: 0 9px 8px 6px; border-right: 1px solid #9c9c9c; display: flex; flex-direction: column; }
.ph { height: 41px; flex: none; display: flex; align-items: center; justify-content: space-between; font-size: 23px; padding: 0 6px 0 4px; box-sizing: border-box; }
.ph span { line-height: 28px; margin-top: -2px; }
.maxb { width: 22px; height: 20px; box-sizing: border-box; border: 2px solid #222; border-top-width: 3px; }
.tree { flex: 1; min-height: 0; overflow: hidden; background: #fbfbfb; border: 1px solid #c9c9c9; border-bottom: 0; }
.row { display: grid; grid-template-columns: 263px 100px 100px 1fr; height: 36px; box-sizing: border-box; border-bottom: 2px solid #e6e6e6; background: #fbfbfb; }
.row.alt { background: #f5f5f5; }
.row.head { height: 35px; background: #f4f4f4; border-bottom: 2px solid #d6d6d6; font-size: 23px; line-height: 28px; }
.c0, .c { border-right: 2px solid #e6e6e6; display: flex; align-items: center; box-sizing: border-box; min-width: 0; }
.head .c0, .head .c { border-right-color: #d4d4d4; padding-left: 6px; }
.c.last { border-right: 0; }
.sorta { width: 0; height: 0; border-left: 10px solid transparent; border-right: 10px solid transparent; border-bottom: 11px solid #222; margin-left: 22px; }
.body { position: relative; }
.vl { position: absolute; border-left: 1px dotted #888; }
.v1 { left: 17px; top: 28px; height: 125px; }
.v2 { left: 49px; top: 181px; height: 56px; }
.nm { position: relative; font-size: 23.5px; white-space: nowrap; color: #252525; padding-left: 33px; }
.nm.indent { padding-left: 69px; }
.tt { line-height: 28px; }
.bd { font-weight: 700; }
.exp { position: absolute; left: 9px; top: 9px; width: 17px; height: 17px; box-sizing: border-box; background: #fff; border: 1px solid #d0d0d0; font: 19px/14px "Liberation Sans", sans-serif; text-align: center; color: #222; }
.hd { position: absolute; left: 26px; top: 17px; width: 6px; border-top: 1px dotted #888; }
.hd2 { position: absolute; left: 49px; top: 17px; width: 18px; border-top: 1px dotted #888; }
.ck { width: 24px; height: 28px; flex: none; margin-right: 4px; }
.nm .ck { margin-left: 5px; }
.ok { margin-left: 9px; }
.bx { width: 24px; height: 24px; flex: none; margin-right: 5px; }
.ti { width: 32px; height: 34px; flex: none; margin-right: 4px; overflow: visible; }
.split { height: 5px; flex: none; background: #b2b2b2; }
.sec { height: 40px; flex: none; box-sizing: border-box; border-bottom: 2px solid #d3d3d3; display: flex; align-items: center; justify-content: space-between; color: #0a7090; font-size: 30px; line-height: 36px; padding: 0 4px 0 7px; }
.chev { width: 28px; height: 22px; }
.view { flex: 1; min-width: 0; display: flex; flex-direction: column; }
.vtabs { height: 36px; flex: none; box-sizing: border-box; border-bottom: 2px solid #4d9db8; padding: 0 0 0 1px; }
.mtab { width: 248px; height: 34px; background: #569fba; color: #fff; display: flex; align-items: center; font-size: 24px; line-height: 30px; padding-left: 5px; box-sizing: border-box; }
.mi { width: 30px; height: 30px; margin-right: 10px; flex: none; }
.mex { width: 24px; height: 24px; margin-left: 3px; flex: none; }
.mtab em { font-style: normal; font-size: 24px; color: #cfe4ec; margin-left: 13px; line-height: 1; }
.canvas { flex: 1; position: relative; background: #d3d4d6; }
.cv { position: absolute; inset: 0; width: 2450px; height: 1408px; }
.ax { font: 300 17px "Open Sans", sans-serif; text-anchor: middle; }
.ax2 { font-size: 15px; }
.pop { position: absolute; left: 43px; top: 747px; width: 163px; height: 82px; box-sizing: border-box; background: #f0f0f0; border: 1px solid #a8a8a8; display: flex; }
.grip { width: 7px; margin: 2px 0 0 2px; height: 74px; background-image: radial-gradient(#b8b8b8 1.4px, transparent 1.6px); background-size: 4px 4px; flex: none; }
.plab { width: 44px; display: flex; flex-direction: column; justify-content: space-around; align-items: flex-end; font-size: 24px; line-height: 30px; padding: 0 2px 2px 0; box-sizing: border-box; color: #222; flex: none; }
.pin { flex: 1; margin: 3px 3px 3px 0; border: 1px solid #a8a8a8; background: #fff; display: flex; flex-direction: column; box-sizing: border-box; font-size: 23px; min-width: 0; }
.pf { height: 36px; border-bottom: 2px solid #a8a8a8; box-sizing: border-box; padding: 5px 2px 0; flex: none; }
.pf em { display: block; font-style: normal; height: 25px; background: #0078d7; color: #fff; line-height: 25px; padding-left: 3px; }
.pf2 { border: 0; flex: 1; padding: 9px 5px 0; position: relative; color: #111; }
.pf2 b { font-weight: 400; line-height: 24px; display: block; }
.dash { position: absolute; left: 6px; right: 3px; bottom: 1px; border-top: 2px dashed #222; }
.sbar { height: 12px; flex: none; background: #569fba; border-top: 1px solid #c8c8c8; margin-right: -4px; box-sizing: border-box; }

.wm { position: absolute; left: 2876px; top: 1756px; width: 262px; height: 82px; display: flex; pointer-events: none; }
.wh { width: 72px; height: 82px; flex: none; }
.wt { margin-left: 8px; display: flex; flex-direction: column; color: #e5e6e7; font-family: "Liberation Sans", "Noto Sans CJK SC", sans-serif; }
.wt b { font-size: 42px; line-height: 46px; margin-top: 10px; white-space: nowrap; font-family: "Liberation Sans", "Noto Sans CJK SC", sans-serif; }
.wt span { font-size: 14px; letter-spacing: 2.6px; line-height: 14px; margin-top: 2px; margin-left: 2px; white-space: nowrap; font-weight: 700; }
</style>
